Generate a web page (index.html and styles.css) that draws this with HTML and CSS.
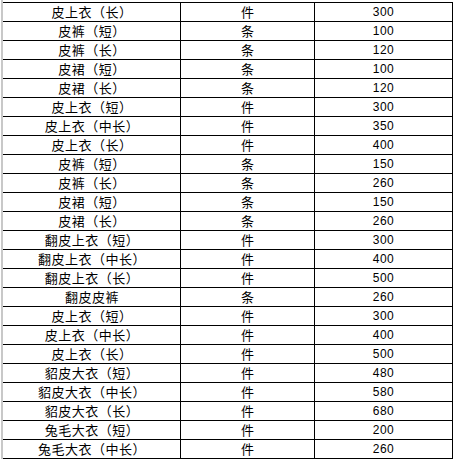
FILE: index.html
```html
<!DOCTYPE html>
<html>
<head>
<meta charset="utf-8">
<link rel="stylesheet" href="styles.css">
</head>
<body>
<div class="sheet">
<table class="grid">
<tr><td class="name">皮上衣（长）</td><td class="unit">件</td><td class="num">300</td></tr>
<tr><td class="name">皮裤（短）</td><td class="unit">条</td><td class="num">100</td></tr>
<tr><td class="name">皮裤（长）</td><td class="unit">条</td><td class="num">120</td></tr>
<tr><td class="name">皮裙（短）</td><td class="unit">条</td><td class="num">100</td></tr>
<tr><td class="name">皮裙（长）</td><td class="unit">条</td><td class="num">120</td></tr>
<tr><td class="name">皮上衣（短）</td><td class="unit">件</td><td class="num">300</td></tr>
<tr><td class="name">皮上衣（中长）</td><td class="unit">件</td><td class="num">350</td></tr>
<tr><td class="name">皮上衣（长）</td><td class="unit">件</td><td class="num">400</td></tr>
<tr><td class="name">皮裤（短）</td><td class="unit">条</td><td class="num">150</td></tr>
<tr><td class="name">皮裤（长）</td><td class="unit">条</td><td class="num">260</td></tr>
<tr><td class="name">皮裙（短）</td><td class="unit">条</td><td class="num">150</td></tr>
<tr><td class="name">皮裙（长）</td><td class="unit">条</td><td class="num">260</td></tr>
<tr><td class="name">翻皮上衣（短）</td><td class="unit">件</td><td class="num">300</td></tr>
<tr><td class="name">翻皮上衣（中长）</td><td class="unit">件</td><td class="num">400</td></tr>
<tr><td class="name">翻皮上衣（长）</td><td class="unit">件</td><td class="num">500</td></tr>
<tr><td class="name">翻皮皮裤</td><td class="unit">条</td><td class="num">260</td></tr>
<tr><td class="name">皮上衣（短）</td><td class="unit">件</td><td class="num">300</td></tr>
<tr><td class="name">皮上衣（中长）</td><td class="unit">件</td><td class="num">400</td></tr>
<tr><td class="name">皮上衣（长）</td><td class="unit">件</td><td class="num">500</td></tr>
<tr><td class="name">貂皮大衣（短）</td><td class="unit">件</td><td class="num">480</td></tr>
<tr><td class="name">貂皮大衣（中长）</td><td class="unit">件</td><td class="num">580</td></tr>
<tr><td class="name">貂皮大衣（长）</td><td class="unit">件</td><td class="num">680</td></tr>
<tr><td class="name">兔毛大衣（短）</td><td class="unit">件</td><td class="num">200</td></tr>
<tr><td class="name">兔毛大衣（中长）</td><td class="unit">件</td><td class="num">260</td></tr>
</table>
</div>
</body>
</html>
```
FILE: styles.css
```css
html, body {
  margin: 0;
  padding: 0;
  background: #ffffff;
}
.sheet {
  width: 454px;
  height: 459px;
  overflow: hidden;
  padding-top: 2px;
  padding-left: 3px;
  box-sizing: border-box;
  border-left: 2px solid #c8c8c8;
  margin-left: 1px;
  position: relative;
}
.grid {
  border-collapse: collapse;
  table-layout: fixed;
  margin-left: -3px;
}
.grid td {
  border: 1px solid #000;
  height: 18px;
  padding: 0;
  text-align: center;
  vertical-align: middle;
  color: #000;
  line-height: 18px;
  white-space: nowrap;
}
.name {
  width: 176px;
  font-family: "Noto Sans CJK SC", sans-serif;
  font-size: 13px;
  letter-spacing: 0.5px;
  border-left-color: transparent !important;
}
.unit {
  width: 133px;
  font-family: "Noto Sans CJK SC", sans-serif;
  font-size: 13px;
}
.num {
  width: 137px;
  font-family: "Liberation Sans", Arial, sans-serif;
  font-size: 12px;
  letter-spacing: 0.5px;
}
```
